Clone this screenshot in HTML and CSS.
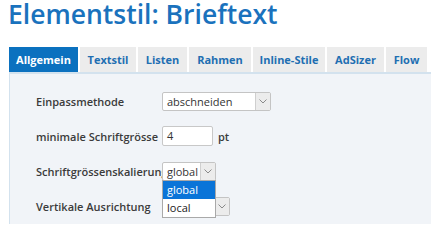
FILE: index.html
```html
<!DOCTYPE html>
<html lang="de">
<head>
<meta charset="utf-8">
<link rel="stylesheet" href="styles.css">
</head>
<body>
<h1 class="title">Elementstil: Brieftext</h1>
<div class="tabs">
  <div class="tab active">Allgemein</div>
  <div class="tab">Textstil</div>
  <div class="tab">Listen</div>
  <div class="tab">Rahmen</div>
  <div class="tab">Inline-Stile</div>
  <div class="tab">AdSizer</div>
  <div class="tab">Flow</div>
</div>
<div class="panel">
  <div class="form">
    <div class="label">Einpassmethode</div>
    <div class="field">
      <div class="select w-wide"><span class="val">abschneiden</span><span class="arrow"><svg width="8" height="5" viewBox="0 0 8 5"><path d="M0.5 0.5 L4 4 L7.5 0.5" fill="none" stroke="#8a8a8a" stroke-width="1"/></svg></span></div>
    </div>

    <div class="label">minimale Schriftgrösse</div>
    <div class="field">
      <div class="input">4</div><span class="unit">pt</span>
    </div>

    <div class="label">Schriftgrössenskalierung</div>
    <div class="field">
      <div class="select w-small"><span class="val">global</span><span class="arrow"><svg width="8" height="5" viewBox="0 0 8 5"><path d="M0.5 0.5 L4 4 L7.5 0.5" fill="none" stroke="#8a8a8a" stroke-width="1"/></svg></span></div>
      <div class="dropdown">
        <div class="opt selected">global</div>
        <div class="opt">local</div>
      </div>
    </div>

    <div class="label">Vertikale Ausrichtung</div>
    <div class="field">
      <div class="select w-mid"><span class="val">oben</span><span class="arrow"><svg width="8" height="5" viewBox="0 0 8 5"><path d="M0.5 0.5 L4 4 L7.5 0.5" fill="none" stroke="#8a8a8a" stroke-width="1"/></svg></span></div>
    </div>
  </div>
</div>
</body>
</html>
```
FILE: styles.css
```css
html, body {
  margin: 0;
  padding: 0;
  background: #ffffff;
}
body {
  font-family: "Open Sans", "DejaVu Sans", sans-serif;
  padding-left: 9px;
  overflow: hidden;
  height: 224px;
}
.title {
  margin: 0 0 19px -1px;
  font-size: 26.5px;
  line-height: 28px;
  font-weight: 600;
  color: #1a72bd;
  white-space: nowrap;
}
.tabs {
  display: flex;
  gap: 2px;
  height: 25px;
}
.tab {
  background: #ececec;
  color: #1f6fb2;
  font-size: 11px;
  font-weight: 700;
  line-height: 25px;
  text-align: center;
  white-space: nowrap;
}
.tab:nth-child(1) { width: 69px; }
.tab:nth-child(2) { width: 56px; }
.tab:nth-child(3) { width: 49px; }
.tab:nth-child(4) { width: 62px; }
.tab:nth-child(5) { width: 72px; }
.tab:nth-child(6) { width: 57px; }
.tab:nth-child(7) { width: 41px; }
.tab.active {
  background: #0b71bf;
  color: #ffffff;
}
.panel {
  border-top: 2px solid #d3e2ee;
  border-left: 1px solid #d3e2ee;
  background: #f1f4f8;
  height: 160px;
  padding: 17px 0 0 26px;
}
.form {
  display: grid;
  grid-template-columns: 126px auto;
  grid-auto-rows: 20px;
  row-gap: 15px;
  align-items: center;
}
.label {
  font-size: 11px;
  font-weight: 600;
  color: #3b3b3b;
  white-space: nowrap;
}
.field {
  position: relative;
  display: flex;
  align-items: center;
  height: 20px;
}
.select {
  box-sizing: border-box;
  height: 19px;
  display: flex;
  background: #ffffff;
  border: 1px solid #c4c4c4;
  border-radius: 2px;
  font-size: 11px;
  color: #333333;
}
.select .val {
  flex: 1;
  padding-left: 4px;
  line-height: 17px;
  white-space: nowrap;
  overflow: hidden;
}
.select .arrow {
  width: 14px;
  border-left: 1px solid #cfcfcf;
  background: #ececec;
  display: flex;
  align-items: center;
  justify-content: center;
}
.w-wide { width: 109px; }
.w-small { width: 54px; }
.w-mid { width: 68px; }
.input {
  box-sizing: border-box;
  width: 51px;
  height: 20px;
  background: #ffffff;
  border: 1px solid #c8c8c8;
  border-radius: 2px;
  font-size: 11px;
  line-height: 18px;
  padding-left: 4px;
  color: #333333;
}
.unit {
  margin-left: 5px;
  font-size: 11px;
  font-weight: 600;
  color: #3b3b3b;
}
.dropdown {
  position: absolute;
  left: 0;
  top: 19px;
  width: 54px;
  box-sizing: border-box;
  background: #ffffff;
  border: 1px solid #a9a9a9;
  z-index: 5;
}
.opt {
  height: 18px;
  line-height: 18px;
  padding-left: 4px;
  font-size: 11px;
  color: #222222;
}
.opt.selected {
  background: #0a74d8;
  color: #ffffff;
}
```
